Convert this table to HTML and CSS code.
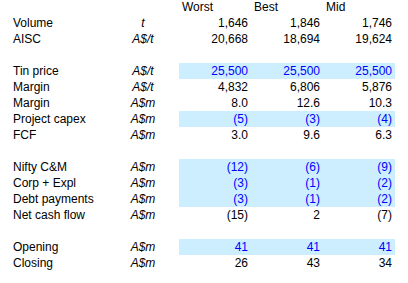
FILE: index.html
```html
<!DOCTYPE html>
<html>
<head>
<meta charset="utf-8">
<link rel="stylesheet" href="styles.css">
</head>
<body>
<table class="sheet">
  <colgroup>
    <col class="c-label">
    <col class="c-unit">
    <col class="c-val">
    <col class="c-val">
    <col class="c-val">
  </colgroup>
  <thead>
    <tr class="head">
      <th></th><th></th><th>Worst</th><th>Best</th><th>Mid</th>
    </tr>
  </thead>
  <tbody>
    <tr><td class="lbl">Volume</td><td class="unit">t</td><td class="num">1,646</td><td class="num">1,846</td><td class="num">1,746</td></tr>
    <tr><td class="lbl">AISC</td><td class="unit">A$/t</td><td class="num">20,668</td><td class="num">18,694</td><td class="num">19,624</td></tr>
    <tr class="blank"><td colspan="5"></td></tr>
    <tr class="input"><td class="lbl">Tin price</td><td class="unit">A$/t</td><td class="num">25,500</td><td class="num">25,500</td><td class="num">25,500</td></tr>
    <tr><td class="lbl">Margin</td><td class="unit">A$/t</td><td class="num">4,832</td><td class="num">6,806</td><td class="num">5,876</td></tr>
    <tr><td class="lbl">Margin</td><td class="unit">A$m</td><td class="num">8.0</td><td class="num">12.6</td><td class="num">10.3</td></tr>
    <tr class="input"><td class="lbl">Project capex</td><td class="unit">A$m</td><td class="num">(5)</td><td class="num">(3)</td><td class="num">(4)</td></tr>
    <tr><td class="lbl">FCF</td><td class="unit">A$m</td><td class="num">3.0</td><td class="num">9.6</td><td class="num">6.3</td></tr>
    <tr class="blank"><td colspan="5"></td></tr>
    <tr class="input"><td class="lbl">Nifty C&amp;M</td><td class="unit">A$m</td><td class="num">(12)</td><td class="num">(6)</td><td class="num">(9)</td></tr>
    <tr class="input"><td class="lbl">Corp + Expl</td><td class="unit">A$m</td><td class="num">(3)</td><td class="num">(1)</td><td class="num">(2)</td></tr>
    <tr class="input"><td class="lbl">Debt payments</td><td class="unit">A$m</td><td class="num">(3)</td><td class="num">(1)</td><td class="num">(2)</td></tr>
    <tr><td class="lbl">Net cash flow</td><td class="unit">A$m</td><td class="num">(15)</td><td class="num">2</td><td class="num">(7)</td></tr>
    <tr class="blank"><td colspan="5"></td></tr>
    <tr class="input"><td class="lbl">Opening</td><td class="unit">A$m</td><td class="num">41</td><td class="num">41</td><td class="num">41</td></tr>
    <tr><td class="lbl">Closing</td><td class="unit">A$m</td><td class="num">26</td><td class="num">43</td><td class="num">34</td></tr>
  </tbody>
</table>
</body>
</html>
```
FILE: styles.css
```css
html, body {
  margin: 0;
  padding: 0;
  background: #ffffff;
}
body {
  font-family: "Liberation Sans", Arial, sans-serif;
  font-size: 12px;
  color: #000000;
}
.sheet {
  margin-left: 10px;
  border-collapse: collapse;
  table-layout: fixed;
  width: 385px;
}
.c-label { width: 97px; }
.c-unit { width: 72px; }
.c-val { width: 72px; }
.sheet th,
.sheet td {
  padding: 0 3px;
  height: 16px;
  line-height: 15px;
  white-space: nowrap;
  overflow: hidden;
  vertical-align: bottom;
}
.sheet .head th {
  height: 15px;
  line-height: 15px;
  font-weight: normal;
  text-align: left;
}
.lbl { text-align: left; }
.unit {
  text-align: center;
  font-style: italic;
}
.num { text-align: right; }
.input .num {
  background: #cceeff;
  color: #0000ff;
}
```
